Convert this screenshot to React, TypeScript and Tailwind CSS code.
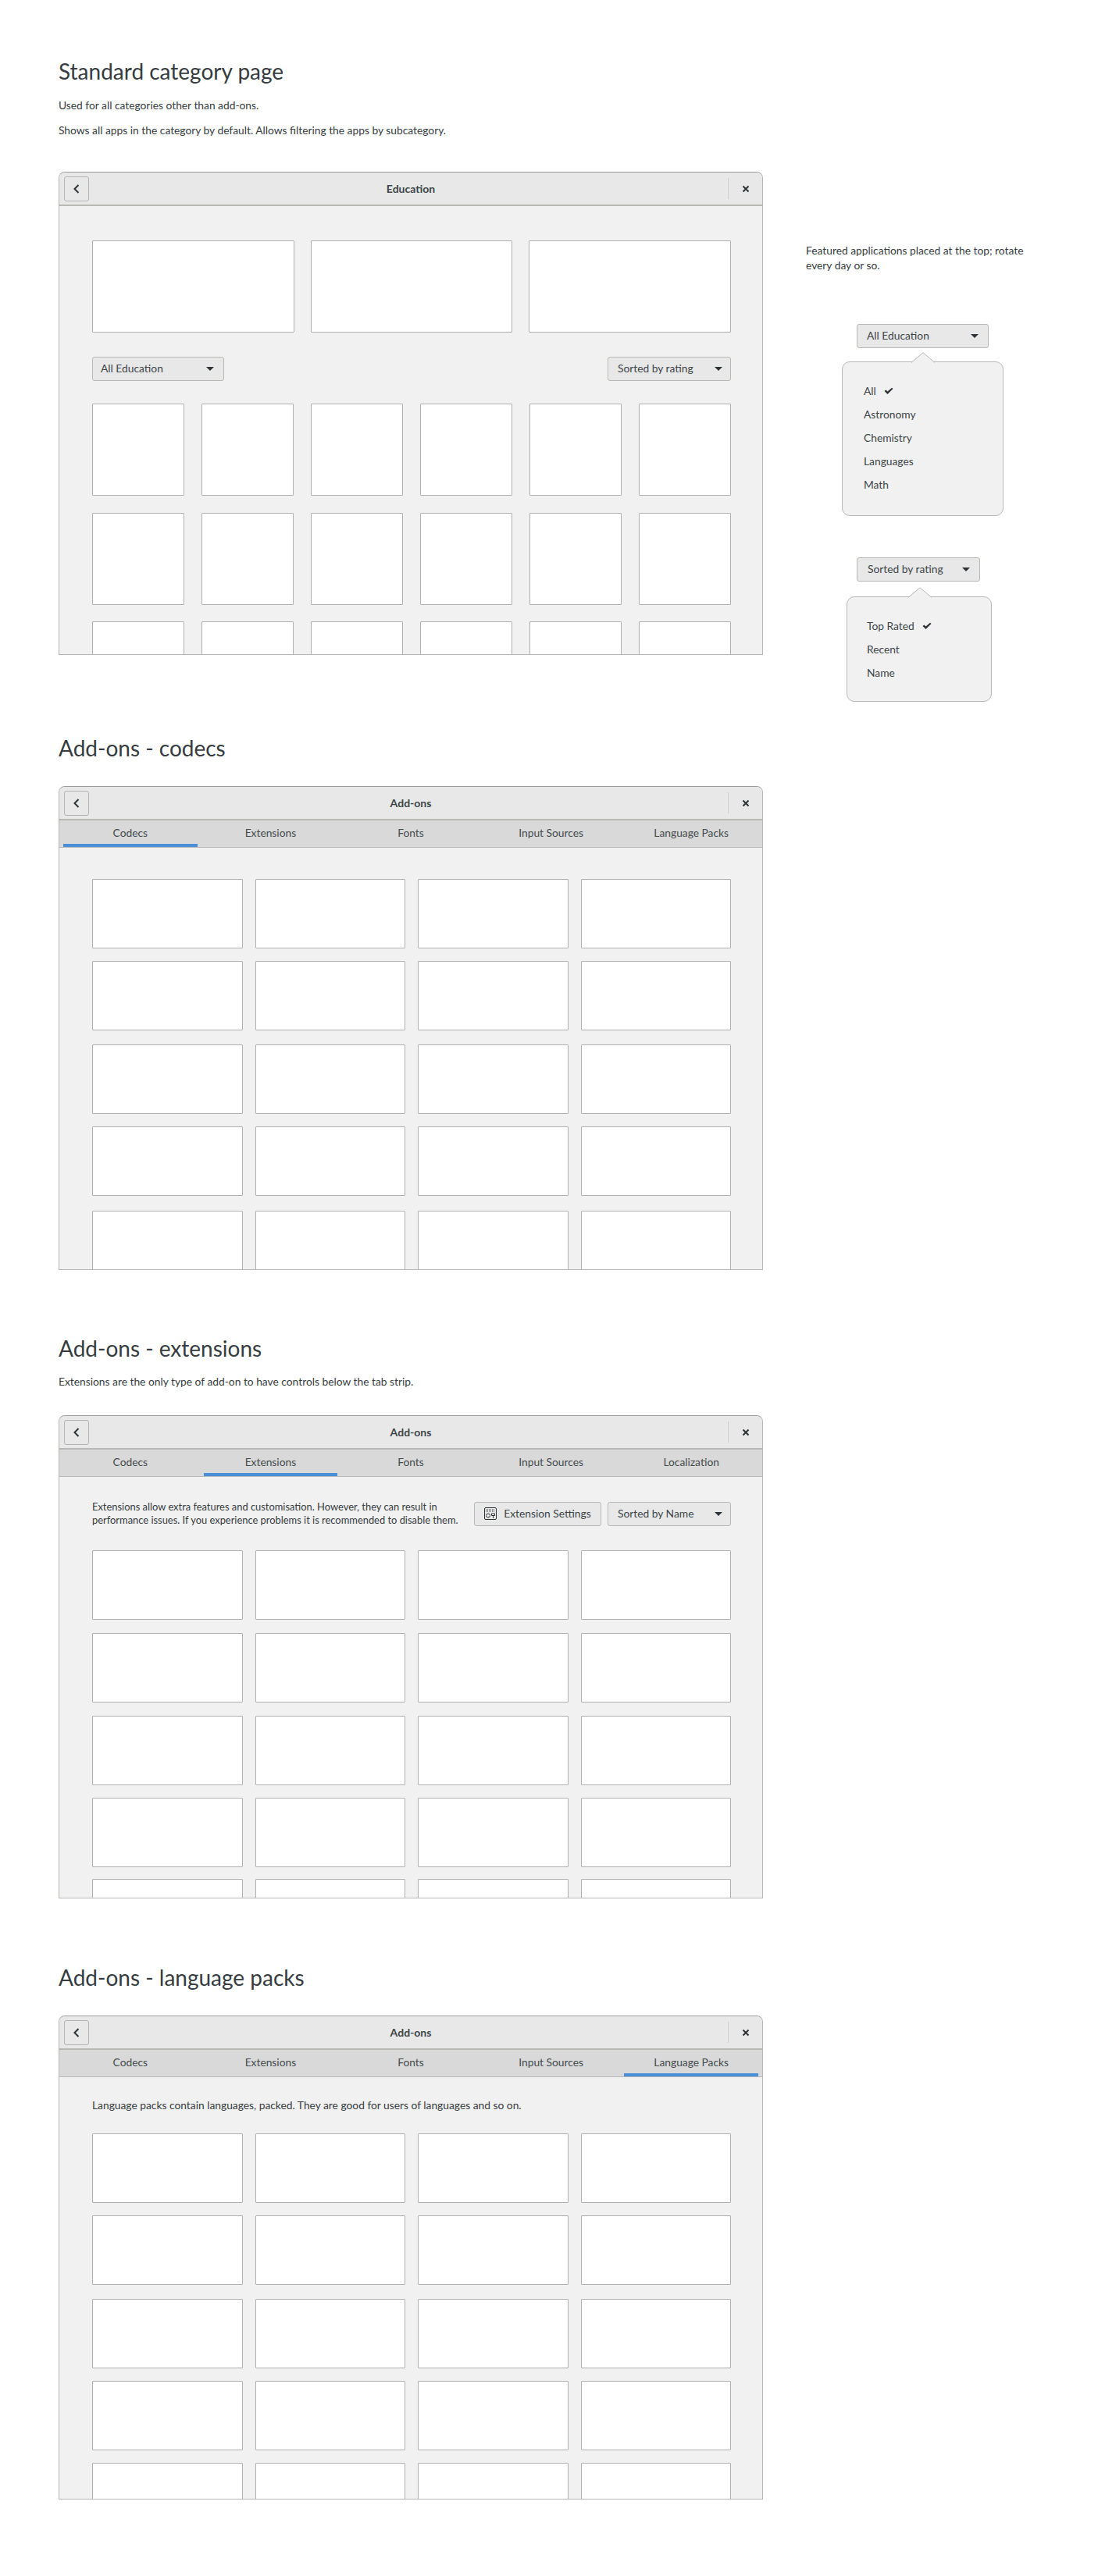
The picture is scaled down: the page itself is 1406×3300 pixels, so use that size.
import React from "react";

const FONT = "font-['Lato','Noto_Sans',sans-serif]";

const BackIcon = () => (
  <svg width="10" height="14" viewBox="0 0 10 14" fill="none" stroke="#2e3436" strokeWidth="2">
    <path d="M7.5 2 L2.5 7 L7.5 12" />
  </svg>
);

const CloseIcon = () => (
  <svg width="10" height="10" viewBox="0 0 10 10" fill="none" stroke="#2e3436" strokeWidth="2">
    <path d="M1.5 1.5 L8.5 8.5 M8.5 1.5 L1.5 8.5" />
  </svg>
);

const Caret = () => (
  <svg width="10" height="5" viewBox="0 0 10 5" fill="#2e3436">
    <path d="M0 0 H10 L5 5 Z" />
  </svg>
);

const Check = () => (
  <svg width="12" height="10" viewBox="0 0 12 10" fill="#2e3436">
    <path d="M0.5 5 L2.5 3.5 L4.5 5.5 L10 0.8 L11.5 2 L4.5 9 Z" />
  </svg>
);

const SettingsIcon = () => (
  <svg width="16" height="16" viewBox="0 0 16 16" fill="none" stroke="#2e3436" strokeWidth="1">
    <rect x="0.5" y="0.5" width="15" height="15" rx="1.5" />
    <path d="M2 3 H14 M2 5 H14" strokeDasharray="1 1" />
    <circle cx="5" cy="10.5" r="2.5" />
    <path d="M9.5 8 H13.5 V10.5 H9.5 Z M11.5 10.5 V14" />
  </svg>
);

const Dropdown = ({ label, className }: { label: string; className: string }) => (
  <div className={`flex h-[31px] items-center justify-between rounded-[3px] border border-[#b8b8b4] bg-[#e8e8e8] text-[13.8px] text-[#3d4548] ${className}`}>
    <span>{label}</span>
    <Caret />
  </div>
);

const Card = ({ className = "" }: { className?: string }) => (
  <div className={`rounded-[1px] border border-[#b0b0b0] bg-white ${className}`} />
);

const CardGrid = ({ rows }: { rows: string[] }) => (
  <div className="flex flex-col">
    {rows.map((cls, i) => (
      <div key={i} className={`grid h-[89px] shrink-0 grid-cols-4 gap-x-[16px] ${cls}`}>
        <Card />
        <Card />
        <Card />
        <Card />
      </div>
    ))}
  </div>
);

const Window = ({
  title,
  tabs,
  active,
  className,
  children,
}: {
  title: string;
  tabs?: string[];
  active?: number;
  className: string;
  children: React.ReactNode;
}) => (
  <div className={`flex w-[902px] flex-col overflow-hidden rounded-t-[8px] border border-[#b6b6b3] border-t-[#9c9c9a] bg-[#f1f1f1] ${className}`}>
    <div className="flex h-[43px] shrink-0 items-center justify-between border-b-2 border-[#b8b8b5] bg-[#e8e8e8] pl-[6px]">
      <div className="flex h-[32px] w-[32px] items-center justify-center rounded-[3px] border border-[#b4b4b4]">
        <BackIcon />
      </div>
      <span className="ml-[6px] text-[14px] font-bold text-[#3d4548]">{title}</span>
      <div className="flex items-center">
        <div className="h-[27px] w-px bg-[#cfcfcf]" />
        <div className="flex w-[43px] items-center justify-center">
          <CloseIcon />
        </div>
      </div>
    </div>
    {tabs && (
      <div className="grid h-[35px] shrink-0 grid-cols-5 gap-x-[8px] border-b border-[#b8b8b8] bg-[#d9d9d9] px-[5px]">
        {tabs.map((tab, i) => (
          <div
            key={tab}
            className={`flex items-center justify-center border-b-4 pt-[3px] text-[13.8px] text-[#444b4e] ${i === active ? "border-[#4a90d9]" : "border-transparent"}`}
          >
            {tab}
          </div>
        ))}
      </div>
    )}
    {children}
  </div>
);

const Popover = ({
  className,
  items,
  arrow,
}: {
  className: string;
  items: { label: string; checked?: boolean }[];
  arrow: string;
}) => (
  <div className={`relative rounded-[10px] border border-[#b8b8b6] bg-[#f1f1f1] py-[26px] ${className}`}>
    <svg className={`absolute -top-[13px] ${arrow}`} width="30" height="14" viewBox="0 0 30 14">
      <path d="M0 13.5 L15 0.8 L30 13.5" fill="#f1f1f1" stroke="#b8b8b6" />
    </svg>
    <div className="flex flex-col gap-y-[8px] text-[13.8px] leading-[22px] text-[#3d4548]">
      {items.map((it) => (
        <div key={it.label} className="flex items-center gap-x-[10px]">
          <span>{it.label}</span>
          {it.checked && <Check />}
        </div>
      ))}
    </div>
  </div>
);

const CODEC_TABS = ["Codecs", "Extensions", "Fonts", "Input Sources", "Language Packs"];
const EXT_TABS = ["Codecs", "Extensions", "Fonts", "Input Sources", "Localization"];

export default function App() {
  return (
    <div className={`${FONT} flex h-[3300px] w-[1406px] overflow-hidden bg-white pl-[75px] text-[#363c3f]`}>
      <div className="w-[902px] shrink-0 pt-[71px]">
        {/* Standard category page */}
        <h1 className="text-[28px] leading-[40px]">Standard category page</h1>
        <p className="mt-[14px] text-[13.8px] leading-[20px]">Used for all categories other than add-ons.</p>
        <p className="mt-[12px] text-[13.8px] leading-[20px]">Shows all apps in the category by default. Allows filtering the apps by subcategory.</p>
        <Window title="Education" className="mt-[43px] h-[619px]">
          <div className="flex shrink-0 flex-col pl-[42px] pr-[40px] pt-[44px]">
            <div className="grid grid-cols-3 gap-x-[21px]">
              <Card className="h-[118px]" />
              <Card className="h-[118px]" />
              <Card className="h-[118px]" />
            </div>
            <div className="mt-[31px] flex justify-between">
              <Dropdown label="All Education" className="w-[169px] pl-[10px] pr-[12px]" />
              <Dropdown label="Sorted by rating" className="w-[158px] pl-[12px] pr-[10px]" />
            </div>
            {["mt-[29px]", "mt-[22px]", "mt-[21px]"].map((mt) => (
              <div key={mt} className={`grid grid-cols-6 gap-x-[22px] ${mt}`}>
                {[0, 1, 2, 3, 4, 5].map((n) => (
                  <Card key={n} className="h-[118px]" />
                ))}
              </div>
            ))}
          </div>
        </Window>

        {/* Add-ons - codecs */}
        <h1 className="mt-[99px] text-[28px] leading-[40px]">Add-ons - codecs</h1>
        <Window title="Add-ons" tabs={CODEC_TABS} active={0} className="mt-[29px] h-[620px]">
          <div className="shrink-0 pl-[42px] pr-[40px] pt-[40px]">
            <CardGrid rows={["", "mt-[16px]", "mt-[18px]", "mt-[16px]", "mt-[19px]"]} />
          </div>
        </Window>

        {/* Add-ons - extensions */}
        <h1 className="mt-[80px] text-[28px] leading-[40px]">Add-ons - extensions</h1>
        <p className="mt-[13px] text-[13.8px] leading-[20px]">Extensions are the only type of add-on to have controls below the tab strip.</p>
        <Window title="Add-ons" tabs={EXT_TABS} active={1} className="mt-[33px] h-[619px]">
          <div className="shrink-0 pl-[42px] pr-[40px]">
            <div className="flex h-[94px] items-center justify-between">
              <p className="whitespace-nowrap text-[12.9px] leading-[17px]">
                Extensions allow extra features and customisation. However, they can result in
                <br />
                performance issues. If you experience problems it is recommended to disable them.
              </p>
              <div className="flex gap-x-[8px]">
                <div className="flex h-[31px] w-[163px] items-center justify-center gap-x-[9px] rounded-[3px] border border-[#b8b8b4] bg-[#e8e8e8] text-[13.8px] text-[#3d4548]">
                  <SettingsIcon />
                  <span>Extension Settings</span>
                </div>
                <Dropdown label="Sorted by Name" className="w-[158px] pl-[12px] pr-[10px]" />
              </div>
            </div>
            <CardGrid rows={["", "mt-[17px]", "mt-[17px]", "mt-[16px]", "mt-[15px]"]} />
          </div>
        </Window>

        {/* Add-ons - language packs */}
        <h1 className="mt-[81px] text-[28px] leading-[40px]">Add-ons - language packs</h1>
        <Window title="Add-ons" tabs={CODEC_TABS} active={4} className="mt-[29px] h-[620px]">
          <div className="shrink-0 pl-[42px] pr-[40px]">
            <div className="flex h-[72px] items-center">
              <p className="text-[13.8px]">Language packs contain languages, packed. They are good for users of languages and so on.</p>
            </div>
            <CardGrid rows={["", "mt-[16px]", "mt-[18px]", "mt-[16px]", "mt-[16px]"]} />
          </div>
        </Window>
      </div>

      {/* notes beside the first window */}
      <div className="ml-[55px] flex w-[300px] flex-col pt-[311px]">
        <p className="text-[13.8px] leading-[19px]">
          Featured applications placed at the top; rotate
          <br />
          every day or so.
        </p>
        <Dropdown label="All Education" className="ml-[65px] mt-[66px] w-[169px] pl-[12px] pr-[12px]" />
        <Popover
          className="ml-[46px] mt-[17px] h-[198px] w-[207px] pl-[27px]"
          arrow="left-[88px]"
          items={[{ label: "All", checked: true }, { label: "Astronomy" }, { label: "Chemistry" }, { label: "Languages" }, { label: "Math" }]}
        />
        <Dropdown label="Sorted by rating" className="ml-[65px] mt-[53px] w-[158px] pl-[13px] pr-[12px]" />
        <Popover
          className="ml-[52px] mt-[19px] h-[135px] w-[186px] pl-[25px]"
          arrow="left-[78px]"
          items={[{ label: "Top Rated", checked: true }, { label: "Recent" }, { label: "Name" }]}
        />
      </div>
    </div>
  );
}
